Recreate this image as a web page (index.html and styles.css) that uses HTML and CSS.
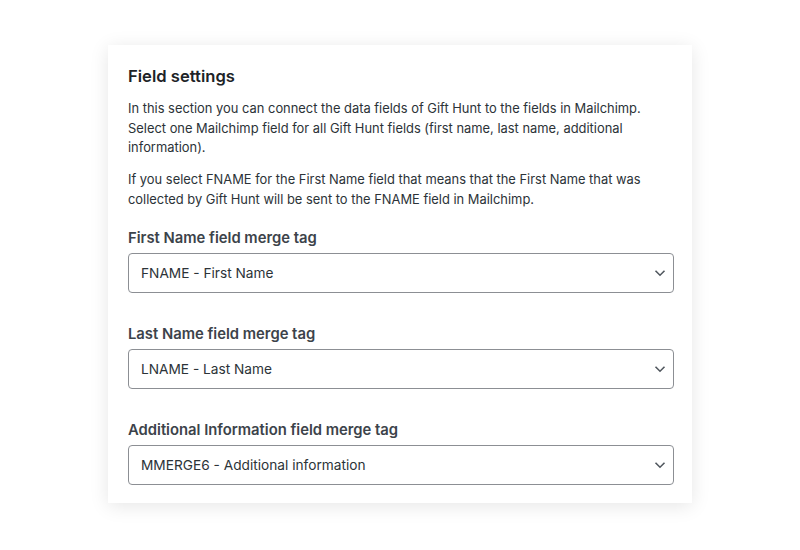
FILE: index.html
```html
<!DOCTYPE html>
<html lang="en">
<head>
    <meta charset="UTF-8">
    <meta name="viewport" content="width=device-width, initial-scale=1.0">
    <title>Field settings</title>
    <link rel="stylesheet" href="styles.css">
</head>
<body>

<div class="card">
    <h2>Field settings</h2>
    <p>In this section you can connect the data fields of Gift Hunt to the fields in Mailchimp.<br>Select one Mailchimp field for all Gift Hunt fields (first name, last name, additional information).</p>
    <p>If you select FNAME for the First Name field that means that the First Name that was collected by Gift Hunt will be sent to the FNAME field in Mailchimp.</p>

    <div class="campo">
        <label for="fname">First Name field merge tag</label>
        <div class="select-wrap">
            <select id="fname">
                <option>FNAME - First Name</option>
            </select>
            <svg class="seta" width="12" height="8" viewBox="0 0 12 8"><path d="M1.5 1.8 6 6.2l4.5-4.4" fill="none" stroke="#50575e" stroke-width="1.6"/></svg>
        </div>
    </div>

    <div class="campo">
        <label for="lname">Last Name field merge tag</label>
        <div class="select-wrap">
            <select id="lname">
                <option>LNAME - Last Name</option>
            </select>
            <svg class="seta" width="12" height="8" viewBox="0 0 12 8"><path d="M1.5 1.8 6 6.2l4.5-4.4" fill="none" stroke="#50575e" stroke-width="1.6"/></svg>
        </div>
    </div>

    <div class="campo">
        <label for="extra">Additional Information field merge tag</label>
        <div class="select-wrap">
            <select id="extra">
                <option>MMERGE6 - Additional information</option>
            </select>
            <svg class="seta" width="12" height="8" viewBox="0 0 12 8"><path d="M1.5 1.8 6 6.2l4.5-4.4" fill="none" stroke="#50575e" stroke-width="1.6"/></svg>
        </div>
    </div>
</div>

</body>
</html>
```

FILE: styles.css
```css
body {
    margin: 0;
    padding: 45px 0 47px;
    font-family: Inter, "Open Sans", sans-serif;
    background-color: #fff;
    color: #1d2327;
}
.card {
    width: 584px;
    box-sizing: border-box;
    margin: 0 auto;
    padding: 19px 18px 18px 20px;
    background: white;
    box-shadow: 0px 3px 18px rgba(0, 0, 0, 0.1);
}
h2 {
    margin: 0;
    font-size: 16.6px;
    line-height: 24px;
    font-weight: 600;
}
p {
    margin: 11px 0 0;
    font-size: 12.9px;
    line-height: 19.7px;
    color: #2c3338;
}
p + p {
    margin-top: 12px;
}
.campo {
    margin-top: 31px;
}
.campo:first-of-type {
    margin-top: 18px;
}
label {
    display: block;
    font-size: 14.8px;
    line-height: 20px;
    font-weight: 600;
    color: #3c434a;
}
.select-wrap {
    position: relative;
    margin-top: 5px;
}
select {
    display: block;
    width: 100%;
    height: 40px;
    padding: 0 36px 0 12px;
    font-family: inherit;
    font-size: 13.7px;
    color: #2c3338;
    background: white;
    border: 1px solid #8c8f94;
    border-radius: 4px;
    appearance: none;
    -webkit-appearance: none;
}
.seta {
    position: absolute;
    right: 8px;
    top: 16px;
    pointer-events: none;
}
```
